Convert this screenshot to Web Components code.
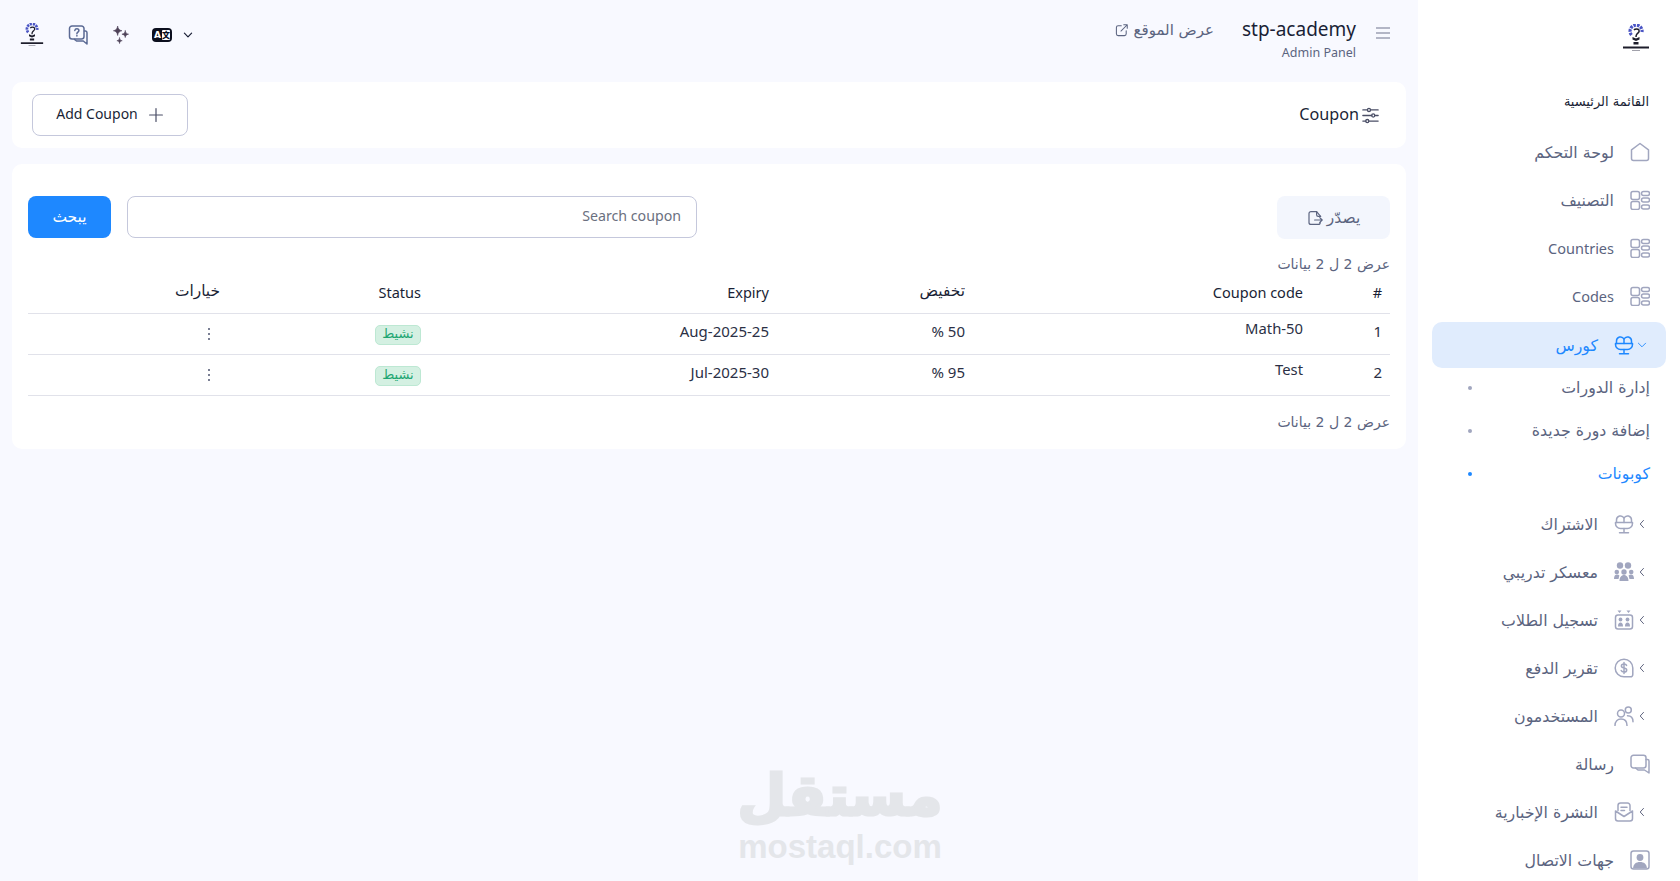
<!DOCTYPE html>
<html lang="ar" dir="rtl">
<head>
<meta charset="utf-8">
<title>Coupon</title>
<style>
  html, body { margin: 0; height: 100%; overflow: hidden; }
  body {
    background: #f8f9ff;
    color: #5b6480;
    font-family: "DejaVu Sans", sans-serif;
    font-size: 14px;
    --latin: "Noto Sans", "DejaVu Sans", sans-serif;
  }
</style>
</head>
<body>
<admin-app></admin-app>

<script>
const ICONS = {
  home: '<path d="M1.500 7.800 10 1.500l8.500 6.300v8.700a2 2 0 0 1-2 2h-13a2 2 0 0 1-2-2z"/>',
  grid: '<rect x="1" y="1.500" width="8.500" height="8" rx="2"/><rect x="1" y="11.500" width="8.500" height="8" rx="2"/><rect x="11.500" y="1.500" width="8" height="4" rx="2"/><rect x="11.500" y="8" width="8" height="4" rx="2"/><rect x="11.500" y="15" width="8" height="4" rx="2"/>',
  screen: '<path d="M2.500 8.500V6a4 4 0 0 1 7.500-2 4 4 0 0 1 7.500 2v2.500"/><path d="M1.500 8.500h17v1a5 5 0 0 1-5 5h-7a5 5 0 0 1-5-5z"/><path d="M10 4v4.500M10 14.500v4M5.500 18.700h9"/>',
  team: '<g fill="currentColor" stroke="none"><circle cx="6" cy="3.500" r="3.200"/><circle cx="14" cy="3.500" r="3.200"/><circle cx="2.800" cy="10" r="2.300"/><circle cx="17.200" cy="10" r="2.300"/><circle cx="10" cy="10" r="2.700"/><path d="M0 17c0-3 1.200-4.400 3-4.400 1 0 1.800.4 2.400 1L4.500 17zM20 17c0-3-1.200-4.400-3-4.400-1 0-1.800.4-2.400 1l.9 3.400zM5.500 19c0-3.500 1.800-6 4.500-6s4.500 2.500 4.500 6z"/></g>',
  seats: '<rect x="1.500" y="5" width="17" height="14" rx="2.500"/><g fill="currentColor" stroke="none"><path d="M3.500 .5h4L5.500 3zM12.500 .5h4l-2 2.500z"/><circle cx="6.500" cy="9.500" r="1.900"/><circle cx="13.500" cy="9.500" r="1.900"/><path d="M4 16.500c0-3 1-4 2.500-4s2.500 1 2.500 4zM11 16.500c0-3 1-4 2.500-4s2.500 1 2.500 4z"/></g>',
  dollar: '<path d="M10 1.200a8.800 8.800 0 0 1 8.800 8.800v6.600a2.200 2.200 0 0 1-2.200 2.200H10A8.800 8.800 0 0 1 10 1.200z"/><path d="M12.600 7.400c-.4-1-1.400-1.500-2.600-1.500-1.500 0-2.600.8-2.600 2 0 2.800 5.300 1.300 5.300 4.100 0 1.200-1.200 2.100-2.700 2.100-1.300 0-2.400-.6-2.800-1.600M10 4.500v11"/>',
  users: '<circle cx="7" cy="7.500" r="3.500"/><circle cx="14.300" cy="4" r="3"/><path d="M1 19.500c0-4.200 2.500-6.500 6-6.500s6 2.300 6 6.500M13.500 9.800c3.300 0 5.500 2.300 5.500 6"/>',
  chat: '<path d="M3.500 1.300h10a2.500 2.500 0 0 1 2.500 2.500v7.700a2.500 2.500 0 0 1-2.500 2.500h-10A2.500 2.500 0 0 1 1 11.500V3.800a2.500 2.500 0 0 1 2.500-2.500z"/><path d="M16 5.500h1.500A1.500 1.500 0 0 1 19 7v12l-4.500-3H8l-2.500-2"/>',
  mail: '<path d="M4 8.500V3.500a2.500 2.500 0 0 1 2.500-2.500h7A2.500 2.500 0 0 1 16 3.500v5"/><path d="M7 5.300h6M7 8.500h3.500"/><path d="M1.500 9l8.500 5.500L18.500 9v7.500a2.500 2.500 0 0 1-2.500 2.500H4a2.500 2.500 0 0 1-2.500-2.500z"/>',
  contact: '<rect x="1" y="1" width="18" height="18" rx="2.500"/><g fill="currentColor" stroke="none"><circle cx="10" cy="7.500" r="3.400"/><path d="M3 18.500c.3-4.500 3-6.500 7-6.500s6.700 2 7 6.500z"/></g>',
  sliders: '<path d="M1 3.500h5.500M10 3.500h9M1 10h10.500M15 10h4M1 16.500h3.500M8 16.500h11"/><circle cx="8.200" cy="3.500" r="1.800"/><circle cx="13.200" cy="10" r="1.800"/><circle cx="6.200" cy="16.500" r="1.800"/>',
  plus: '<path d="M10 2v16M2 10h16"/>',
  link: '<path d="M16 11v4.500a2.500 2.500 0 0 1-2.500 2.500h-9A2.500 2.500 0 0 1 2 15.500v-9A2.500 2.500 0 0 1 4.500 4H9"/><path d="M8.500 11.500 17.500 2.500M12.500 2.500h5v5"/>',
  exportfile: '<path d="M17 8 12 2H5a2.500 2.500 0 0 0-2.500 2.500v11A2.500 2.500 0 0 0 5 18h9a2.500 2.500 0 0 0 2.500-2.500"/><path d="M12 2v4a2 2 0 0 0 2 2h3M9.500 12.500H19M16 9.500l3 3-3 3"/>',
  help: '<path d="M4 1h9.500A2.500 2.500 0 0 1 16 3.500v8a2.500 2.500 0 0 1-2.500 2.500H4a2.500 2.500 0 0 1-2.500-2.500v-8A2.500 2.500 0 0 1 4 1z"/><path d="M16.500 6h1A1.700 1.700 0 0 1 19 7.700V19l-3.700-3H8.500l-2-1.600"/><path d="M6.800 5.500c.2-1.200 1-1.800 2.100-1.800s2 .7 2 1.800c0 1.700-2 1.600-2 3.200M8.900 10.500v.6"/>',
  sparkle: '<g fill="currentColor" stroke="currentColor" stroke-width=".6"><path d="M7 0c.5 3.200 1.800 4.500 4.500 5C8.800 5.500 7.500 6.800 7 10 6.500 6.800 5.200 5.500 2.500 5 5.200 4.500 6.500 3.200 7 0z"/><path d="M15 5c.4 2.300 1.300 3.200 3.500 3.600-2.200.4-3.100 1.300-3.500 3.600-.4-2.300-1.300-3.200-3.500-3.600C13.700 8.200 14.600 7.300 15 5z"/><path d="M9 12.500c.3 1.900 1 2.700 2.800 3-1.800.3-2.500 1.100-2.800 3-.3-1.900-1-2.700-2.800-3 1.800-.3 2.500-1.100 2.800-3z"/></g>',
  chevdown: '<path d="M4 7l6 6 6-6"/>',
  chevleft: '<path d="M12.500 4 7 10l5.500 6"/>'
};

const iconTemplate = document.createElement('template');
iconTemplate.innerHTML = `
  <style>
    :host { display: inline-flex; flex: none; width: var(--size, 20px); height: var(--size, 20px); }
    svg { width: 100%; height: 100%; fill: none; stroke: currentColor; stroke-width: var(--weight, 1.5); stroke-linecap: round; stroke-linejoin: round; }
  </style>
  <svg viewBox="0 0 20 20"></svg>`;

class UiIcon extends HTMLElement {
  constructor() {
    super();
    this.attachShadow({ mode: 'open' }).appendChild(iconTemplate.content.cloneNode(true));
  }
  static get observedAttributes() {
    return [ 'name' ];
  }
  attributeChangedCallback() {
    this.shadowRoot.querySelector('svg').innerHTML = ICONS[this.getAttribute('name')] || '';
  }
}
customElements.define('ui-icon', UiIcon);

// the academy logo, a gear-and-question mark; only the shape, the caption is a bar
const logoTemplate = document.createElement('template');
logoTemplate.innerHTML = `
  <style>
    :host { display: inline-flex; flex: none; width: var(--size, 28px); height: var(--size, 28px); }
    svg { width: 100%; height: 100%; }
  </style>
  <svg viewBox="0 0 28 28">
    <path d="M9.500 11a6 6 0 1 1 10.500-3" fill="none" stroke="#4a55c4" stroke-width="3.200" stroke-dasharray="2.600 1"/>
    <path d="M12 6c1-1.500 4-1.500 5 0 1 2-1 3-2 4-.8.8-1 1.500-1 3" fill="none" stroke="#1d1d2b" stroke-width="1.500"/>
    <path d="M10.500 13l3.500 1.500 3.500-1.500v2.500l-3.500 1.500-3.500-1.500zM11.500 18h5v2.500h-5z" fill="#1d1d2b"/>
    <rect x="1" y="22.500" width="26" height="2" fill="#1d1d2b"/>
    <rect x="10" y="26" width="8" height=".8" fill="#8a8a96"/>
  </svg>`;

class BrandLogo extends HTMLElement {
  constructor() {
    super();
    this.attachShadow({ mode: 'open' }).appendChild(logoTemplate.content.cloneNode(true));
  }
}
customElements.define('brand-logo', BrandLogo);

const navItemTemplate = document.createElement('template');
navItemTemplate.innerHTML = `
  <style>
    :host { display: flex; align-items: center; height: 48px; }
    :host([active]) { align-items: flex-end; }
    .row {
      flex: 1;
      height: 46px;
      padding: 0 16px;
      display: flex;
      align-items: center;
      border-radius: 10px;
      color: #5b6480;
      font-size: 15.800px;
    }
    .chev { width: 16px; display: flex; justify-content: center; color: #4e5470; --size: 12px; }
    .icon { color: #a1a6bf; --size: 20px; display: flex; }
    .label { margin-inline-start: 16px; white-space: nowrap; }
    :host([active]) .row { background: #e0ecfd; color: #1e88ff; }
    :host([active]) .icon, :host([active]) .chev { color: #1e88ff; }
  </style>
  <div class="row">
    <span class="chev"></span>
    <span class="icon"><ui-icon></ui-icon></span>
    <span class="label"><slot></slot></span>
  </div>`;

class NavItem extends HTMLElement {
  constructor() {
    super();
    this.attachShadow({ mode: 'open' }).appendChild(navItemTemplate.content.cloneNode(true));
  }
  connectedCallback() {
    const chev = this.shadowRoot.querySelector('.chev');
    const dir = this.getAttribute('chevron');
    if (dir) {
      chev.innerHTML = `<ui-icon name="${dir === 'down' ? 'chevdown' : 'chevleft'}"></ui-icon>`;
    } else {
      chev.style.display = 'none';
    }
    this.shadowRoot.querySelector('.icon ui-icon').setAttribute('name', this.getAttribute('icon'));
  }
}
customElements.define('nav-item', NavItem);

const subItemTemplate = document.createElement('template');
subItemTemplate.innerHTML = `
  <style>
    :host { display: flex; align-items: center; justify-content: space-between; height: 43px; padding: 0 16px 0 36px; color: #5b6480; font-size: 15.800px; }
    i { width: 4px; height: 4px; border-radius: 50%; background: #a1a6bf; }
    :host([active]) { color: #1e88ff; }
    :host([active]) i { background: #1e88ff; }
  </style>
  <span><slot></slot></span><i></i>`;

class NavSubItem extends HTMLElement {
  constructor() {
    super();
    this.attachShadow({ mode: 'open' }).appendChild(subItemTemplate.content.cloneNode(true));
  }
}
customElements.define('nav-sub-item', NavSubItem);

const sidebarTemplate = document.createElement('template');
sidebarTemplate.innerHTML = `
  <style>
    :host { display: block; flex: none; width: 262px; height: 881px; box-sizing: border-box; background: #fff; padding: 0 14px; overflow: hidden; }
    .logo { display: flex; padding: 24px 16px 0 0; --size: 28px; }
    h2 { margin: 40px 17px 16px 0; height: 20px; line-height: 20px; font-size: 13px; font-weight: 400; color: #1a1f36; }
    .sub { margin: -2px 0 5px; }
    [lang=en] { font-family: var(--latin); font-size: 14.500px; }
  </style>
  <div class="logo"><brand-logo></brand-logo></div>
  <h2>القائمة الرئيسية</h2>
  <nav>
    <nav-item icon="home">لوحة التحكم</nav-item>
    <nav-item icon="grid">التصنيف</nav-item>
    <nav-item icon="grid"><span lang="en">Countries</span></nav-item>
    <nav-item icon="grid"><span lang="en">Codes</span></nav-item>
    <nav-item icon="screen" chevron="down" active>كورس</nav-item>
    <div class="sub">
      <nav-sub-item>إدارة الدورات</nav-sub-item>
      <nav-sub-item>إضافة دورة جديدة</nav-sub-item>
      <nav-sub-item active>كوبونات</nav-sub-item>
    </div>
    <nav-item icon="screen" chevron="left">الاشتراك</nav-item>
    <nav-item icon="team" chevron="left">معسكر تدريبي</nav-item>
    <nav-item icon="seats" chevron="left">تسجيل الطلاب</nav-item>
    <nav-item icon="dollar" chevron="left">تقرير الدفع</nav-item>
    <nav-item icon="users" chevron="left">المستخدمون</nav-item>
    <nav-item icon="chat">رسالة</nav-item>
    <nav-item icon="mail" chevron="left">النشرة الإخبارية</nav-item>
    <nav-item icon="contact">جهات الاتصال</nav-item>
  </nav>`;

class AdminSidebar extends HTMLElement {
  constructor() {
    super();
    this.attachShadow({ mode: 'open' }).appendChild(sidebarTemplate.content.cloneNode(true));
  }
}
customElements.define('admin-sidebar', AdminSidebar);

const topbarTemplate = document.createElement('template');
topbarTemplate.innerHTML = `
  <style>
    :host { display: flex; align-items: center; height: 82px; padding: 0 16px 0 8px; box-sizing: border-box; }
    .burger { display: flex; flex-direction: column; gap: 3px; width: 14px; margin-top: -16px; }
    .burger i { display: block; height: 2px; background: #b3b6c6; }
    .title { margin-inline-start: 20px; display: flex; flex-direction: column; align-items: flex-start; margin-top: -3px; font-family: var(--latin); }
    .name { direction: ltr; font-size: 19px; line-height: 26px; color: #1a1f36; margin-top: -1px; }
    .role { direction: ltr; font-size: 12.500px; line-height: 21px; color: #5b6480; }
    .site { margin-inline-start: 28px; display: flex; align-items: center; gap: 4px; font-size: 15px; color: #5b6480; margin-top: -22px; --size: 14px; }
    .tools { margin-inline-start: auto; display: flex; align-items: center; margin-top: -12px; }
    .chev { color: #1a1f36; --size: 12px; --weight: 2; margin-inline-end: 10px; }
    .lang { width: 20px; height: 14px; background: #0c0f1e; border-radius: 4px; display: flex; align-items: center; justify-content: center; gap: 1px; direction: ltr; color: #fff; font-size: 9px; font-weight: 700; line-height: 1; }
    .lang b { background: #fff; color: #0c0f1e; width: 8px; height: 10px; display: block; text-align: center; border-radius: 1px; font-size: 8px; line-height: 10px; font-family: "Noto Sans CJK SC", sans-serif; }
    .spark { color: #4e4258; --size: 19px; margin-inline-start: 22px; }
    .help { color: #5b6a94; --size: 20px; margin-inline-start: 23px; }
    brand-logo { --size: 24px; margin-inline-start: 24px; }
  </style>
  <div class="burger"><i></i><i></i><i></i></div>
  <div class="title">
    <span class="name">stp-academy</span>
    <span class="role">Admin Panel</span>
  </div>
  <div class="site">عرض الموقع <ui-icon name="link"></ui-icon></div>
  <div class="tools">
    <ui-icon class="chev" name="chevdown"></ui-icon>
    <div class="lang">A<b>文</b></div>
    <ui-icon class="spark" name="sparkle"></ui-icon>
    <ui-icon class="help" name="help"></ui-icon>
    <brand-logo></brand-logo>
  </div>`;

class TopBar extends HTMLElement {
  constructor() {
    super();
    this.attachShadow({ mode: 'open' }).appendChild(topbarTemplate.content.cloneNode(true));
  }
}
customElements.define('top-bar', TopBar);

const headerTemplate = document.createElement('template');
headerTemplate.innerHTML = `
  <style>
    :host { display: flex; align-items: center; justify-content: space-between; height: 66px; padding: 0 27px 0 20px; background: #fff; border-radius: 10px; box-sizing: border-box; font-family: var(--latin); }
    .title { display: flex; align-items: center; gap: 3px; font-size: 16.200px; color: #1a1f36; --size: 17px; }
    .title span { padding-bottom: 2px; }
    .title ui-icon { color: #4a4e66; }
    button {
      width: 156px; height: 42px;
      display: flex; align-items: center; justify-content: center; gap: 10px;
      direction: rtl; background: #fff;
      border: 1px solid #c5c8dc; border-radius: 8px;
      font: inherit; font-size: 14px; color: #1a1f36;
      --size: 16px;
    }
    button span { padding-bottom: 3px; }
    button ui-icon { color: #4a4e66; }
  </style>
  <div class="title"><ui-icon name="sliders"></ui-icon><span>Coupon</span></div>
  <button><ui-icon name="plus"></ui-icon><span>Add Coupon</span></button>`;

class CouponHeader extends HTMLElement {
  constructor() {
    super();
    this.attachShadow({ mode: 'open' }).appendChild(headerTemplate.content.cloneNode(true));
  }
}
customElements.define('coupon-header', CouponHeader);

const tableTemplate = document.createElement('template');
tableTemplate.innerHTML = `
  <style>
    :host { display: block; margin-top: 16px; height: 285px; padding: 32px 16px 0 16px; background: #fff; border-radius: 10px; box-sizing: border-box; }
    .tools { display: flex; align-items: flex-start; }
    .export { width: 113px; height: 43px; display: flex; align-items: center; justify-content: center; gap: 4px; background: #f3f6fd; border: 0; border-radius: 8px; font: inherit; font-size: 15.500px; color: #5b6480; --size: 16px; }
    .search { margin-inline-start: auto; display: flex; gap: 16px; }
    input { width: 570px; height: 42px; box-sizing: border-box; padding: 0 15px 3px; border: 1px solid #c5c8dc; border-radius: 8px; font-family: var(--latin); font-size: 14.200px; background: #fff; }
    input::placeholder { color: #6b7080; opacity: 1; }
    .go { width: 83px; height: 42px; background: #1e88ff; border: 0; border-radius: 8px; font: inherit; font-size: 15.500px; color: #fff; }
    .count { height: 20px; line-height: 20px; margin-top: 15px; font-size: 14px; color: #5b6480; }
    table { width: 100%; border-collapse: collapse; table-layout: fixed; }
    th, td { padding: 0 8px; text-align: right; border-bottom: 1px solid #e1e2ea; vertical-align: middle; font-family: var(--latin); box-sizing: border-box; }
    th { height: 39px; font-weight: 400; font-size: 14.500px; color: #1a1f36; padding-bottom: 2px; }
    td { height: 41px; font-size: 15px; line-height: 20px; color: #2b3045; padding-bottom: 5px; }
    th.ar { font-family: "DejaVu Sans", sans-serif; font-size: 15.400px; padding-bottom: 4px; }
    td.code span { position: relative; top: -3px; font-size: 14.800px; }
    td.stat { padding-bottom: 0; }
    td.stat .badge { position: relative; top: 1px; }
    .badge { display: inline-block; width: 46px; height: 20px; box-sizing: border-box; border: 1px solid #bde8d3; border-radius: 5px; background: #d4f0e2; color: #1ea672; font-family: "DejaVu Sans", sans-serif; font-size: 13px; line-height: 15px; text-align: center; vertical-align: middle; }
    .dots { display: inline-flex; flex-direction: column; gap: 3px; margin-inline-start: 10px; vertical-align: middle; padding-bottom: 2px; }
    .dots i { width: 2px; height: 2px; background: #4e5470; border-radius: 50%; }
    .foot { margin-top: 16px; }
  </style>
  <div class="tools">
    <button class="export"><span>يصدّر</span><ui-icon name="exportfile"></ui-icon></button>
    <div class="search">
      <input placeholder="Search coupon">
      <button class="go">يبحث</button>
    </div>
  </div>
  <div class="count">عرض 2 ل 2 بيانات</div>
  <table>
    <colgroup><col style="width:79px"><col style="width:338px"><col style="width:196px"><col style="width:348px"><col style="width:201px"><col></colgroup>
    <thead><tr><th>#</th><th>Coupon code</th><th class="ar">تخفيض</th><th>Expiry</th><th>Status</th><th class="ar">خيارات</th></tr></thead>
    <tbody>
      <tr><td>1</td><td class="code"><span>Math-50</span></td><td>50 %</td><td>Aug-2025-25</td><td class="stat"><span class="badge">نشيط</span></td><td class="stat"><span class="dots"><i></i><i></i><i></i></span></td></tr>
      <tr><td>2</td><td class="code"><span>Test</span></td><td>95 %</td><td>Jul-2025-30</td><td class="stat"><span class="badge">نشيط</span></td><td class="stat"><span class="dots"><i></i><i></i><i></i></span></td></tr>
    </tbody>
  </table>
  <div class="count foot">عرض 2 ل 2 بيانات</div>`;

class CouponTable extends HTMLElement {
  constructor() {
    super();
    this.attachShadow({ mode: 'open' }).appendChild(tableTemplate.content.cloneNode(true));
  }
}
customElements.define('coupon-table', CouponTable);

const appTemplate = document.createElement('template');
appTemplate.innerHTML = `
  <style>
    :host { display: flex; position: relative; height: 881px; width: 1680px; overflow: hidden; }
    main { flex: 1; min-width: 0; padding: 0 12px; box-sizing: border-box; }
    .mark { position: absolute; left: 720px; top: 760px; width: 240px; text-align: center; color: #e4e6ea; font-weight: 700; pointer-events: none; }
    .mark .ar { display: block; font-family: "DejaVu Sans", sans-serif; font-size: 56px; line-height: 72px; -webkit-text-stroke: 3px #e4e6ea; }
    .mark .en { display: block; font-family: "Liberation Sans", sans-serif; font-size: 33px; line-height: 30px; direction: ltr; }
  </style>
  <admin-sidebar></admin-sidebar>
  <main>
    <top-bar></top-bar>
    <coupon-header></coupon-header>
    <coupon-table></coupon-table>
  </main>
  <div class="mark"><span class="ar">مستقل</span><span class="en">mostaql.com</span></div>`;

class AdminApp extends HTMLElement {
  constructor() {
    super();
    this.attachShadow({ mode: 'open' }).appendChild(appTemplate.content.cloneNode(true));
  }
}
customElements.define('admin-app', AdminApp);
</script>
</body>
</html>
